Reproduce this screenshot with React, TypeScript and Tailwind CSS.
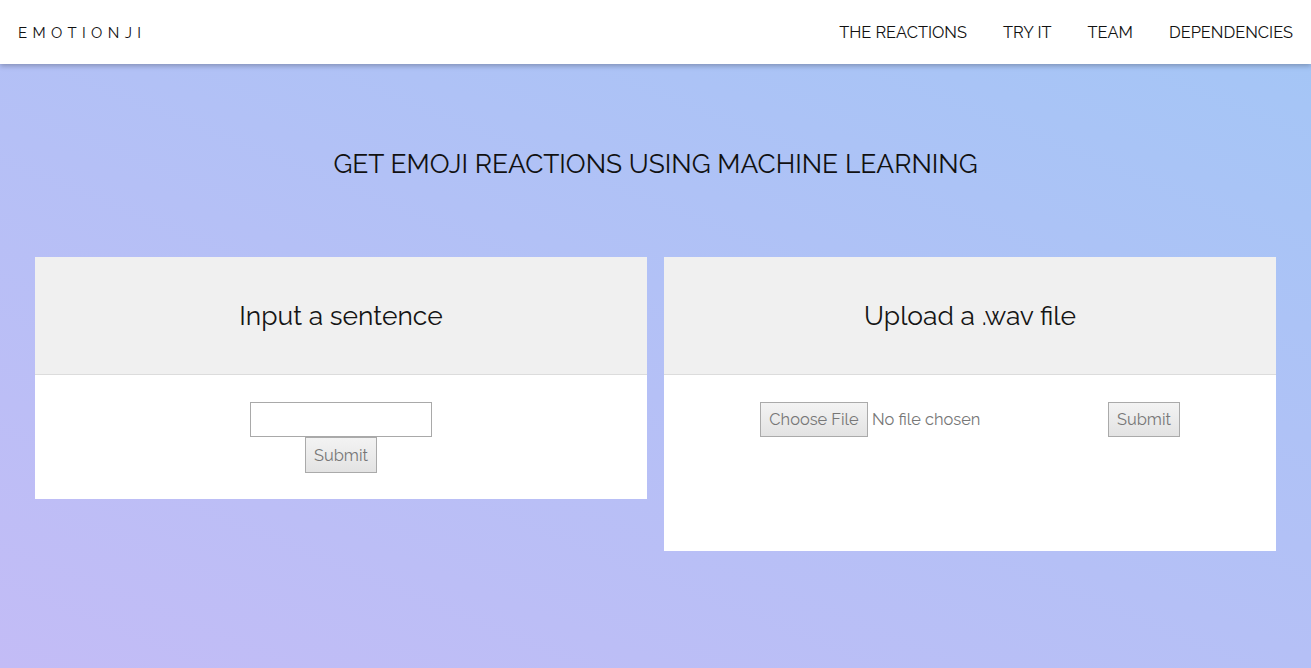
import React from "react";

export default function App() {
  const font = { fontFamily: "Raleway, Lato, 'Open Sans', sans-serif" };
  return (
    <div
      className="w-[1311px] h-[668px] overflow-hidden bg-[linear-gradient(22deg,#c3bcf6_0%,#b5c0f6_45%,#a3c6f6_100%)] text-[#111]"
      style={font}
    >
      <nav className="relative z-10 h-16 bg-white shadow-[0_2px_5px_rgba(0,0,0,0.25)] flex items-center justify-between pl-[18px] pr-0 pt-[2px]">
        <div className="text-[15px] tracking-[5.4px] text-[#111]">EMOTIONJI</div>
        <ul className="flex items-center text-[16.4px] text-[#111]">
          <li className="px-[18px]">THE REACTIONS</li>
          <li className="px-[18px]">TRY IT</li>
          <li className="px-[18px]">TEAM</li>
          <li className="px-[18px]">DEPENDENCIES</li>
        </ul>
      </nav>

      <h1 className="text-center text-[26.4px] mt-[84px] leading-[32px] text-[#111]">
        GET EMOJI REACTIONS USING MACHINE LEARNING
      </h1>

      <div className="flex items-start gap-[17px] px-[35px] mt-[77px]">
        <div className="w-[612px] bg-white">
          <div className="h-[118px] bg-[#f0f0f0] border-b border-[#dcdcdc] flex items-center justify-center pt-[1px] text-[26.4px] text-[#151515]">
            Input a sentence
          </div>
          <div className="flex flex-col items-center pt-[27px] pb-[26px]">
            <input
              type="text"
              className="w-[182px] h-[35px] border border-[#a9a9a9] bg-white outline-none"
            />
            <button className="w-[72px] h-[36px] pt-[2px] border border-[#aaa] bg-[linear-gradient(#f3f3f3,#e3e3e3)] text-[16.4px] text-[#777]">
              Submit
            </button>
          </div>
        </div>

        <div className="w-[612px] bg-white h-[294px]">
          <div className="h-[118px] bg-[#f0f0f0] border-b border-[#dcdcdc] flex items-center justify-center pt-[1px] text-[26.4px] text-[#151515]">
            Upload a .wav file
          </div>
          <div className="flex justify-center pt-[27px]">
            <div className="flex items-center w-[348px]">
              <button className="w-[108px] h-[35px] pt-[2px] border border-[#aaa] bg-[linear-gradient(#f3f3f3,#e3e3e3)] text-[16.4px] text-[#777]">
                Choose File
              </button>
              <span className="ml-[4px] pt-[2px] text-[16.4px] text-[#777]">No file chosen</span>
            </div>
            <button className="w-[72px] h-[35px] pt-[2px] border border-[#aaa] bg-[linear-gradient(#f3f3f3,#e3e3e3)] text-[16.4px] text-[#777]">
              Submit
            </button>
          </div>
        </div>
      </div>
    </div>
  );
}
